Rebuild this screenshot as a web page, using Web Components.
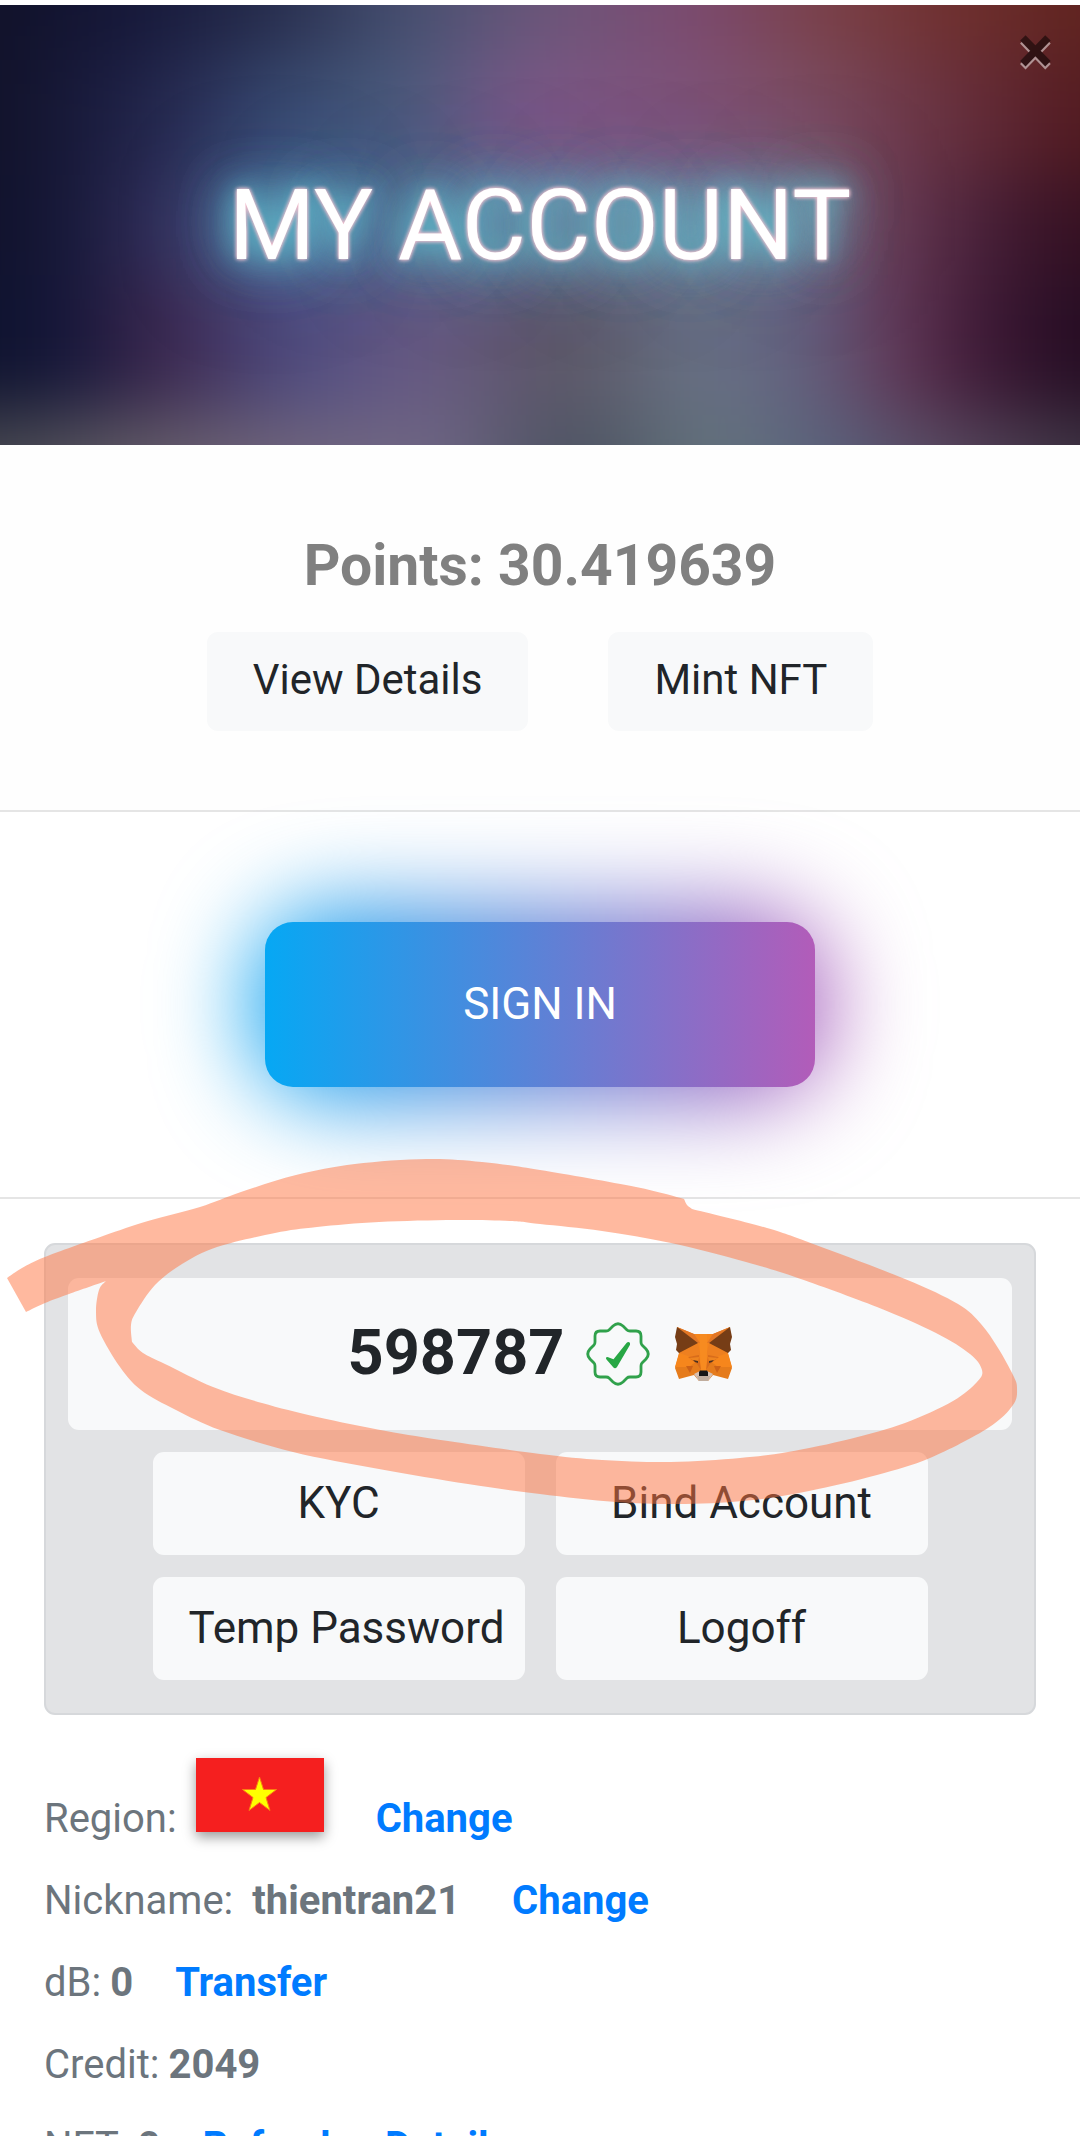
<!DOCTYPE html>
<html lang="en">
<head>
<meta charset="utf-8">
<meta name="viewport" content="width=device-width, initial-scale=1">
<title>My Account</title>
<style>
  html, body { margin: 0; height: 100%; background: #fff; }
  body { font-family: Roboto, "Liberation Sans", sans-serif; color: #212529; overflow: hidden; }
</style>
</head>
<body>
<account-page></account-page>

<script>
const define = (name, html, setup) => {
  const template = document.createElement('template');
  template.innerHTML = html;
  customElements.define(name, class extends HTMLElement {
    constructor() {
      super();
      this.attachShadow({ mode: 'open' }).append(template.content.cloneNode(true));
    }
    connectedCallback() { if (setup) setup(this, this.shadowRoot); }
  });
};

// One horizontal band of the hero's colour field; stops are "offset colour" pairs.
const band = (id, stops) => `<linearGradient id="${id}" gradientUnits="userSpaceOnUse" x1="0" y1="0" x2="1080" y2="0">` +
  stops.map(([o, c]) => `<stop offset="${o}" stop-color="${c}"/>`).join('') + '</linearGradient>';

define('hero-banner', `
<style>
  :host { display: grid; height: 440px; overflow: hidden; position: relative; background: #2a2a45; }
  svg, h1 { grid-area: 1 / 1; }
  svg { width: 100%; height: 100%; min-height: 0; }
  h1 { margin: 0; place-self: center; z-index: 1; font-size: 99px; line-height: 118px; font-weight: 400; color: #fff;
       text-shadow: 0 0 4px #f3b5c6, 0 0 4px #f3d5e0, 0 0 28px #5fc6d4, 0 0 56px #6cc8d2, 0 0 56px #6cc0d0, 0 0 110px rgba(80, 110, 190, .5); }
  button { position: absolute; z-index: 2; top: 13px; right: 27px; padding: 0; border: 0; background: none;
           font: 700 66px/66px Roboto, sans-serif; color: #000; text-shadow: 0 3px 0 #fff; opacity: .5; }
</style>
<svg viewBox="0 0 1080 440" preserveAspectRatio="none" aria-hidden="true">
  <defs>
    <filter id="soft" filterUnits="userSpaceOnUse" x="-120" y="-180" width="1320" height="800" color-interpolation-filters="sRGB"><feGaussianBlur stdDeviation="36"/></filter>
    ${band('r1', [[0,'#11122a'],[.125,'#16183a'],[.25,'#262c4c'],[.375,'#454f70'],[.5,'#6b577a'],[.64,'#7c4a70'],[.76,'#7a4149'],[.88,'#70302f'],[1,'#602420']])}
    ${band('r2', [[0,'#11122a'],[.1,'#1c1e42'],[.18,'#2b3058'],[.25,'#374a72'],[.375,'#4b5d7e'],[.48,'#7b5789'],[.64,'#7e5379'],[.75,'#7b4e64'],[.86,'#6a3444'],[1,'#521a20']])}
    ${band('r3', [[0,'#10122c'],[.08,'#1a1b3e'],[.15,'#36325e'],[.25,'#45598a'],[.4,'#526488'],[.55,'#6b6787'],[.7,'#726c88'],[.8,'#70465e'],[.86,'#5c3049'],[.92,'#431c34'],[1,'#351021']])}
    ${band('r4', [[0,'#0f132f'],[.06,'#15173a'],[.15,'#3c274e'],[.27,'#4e4c80'],[.39,'#685a84'],[.52,'#5c5766'],[.65,'#687286'],[.75,'#625f7e'],[.83,'#633857'],[.9,'#401b38'],[1,'#240c22']])}
    ${band('r5', [[0,'#484951'],[.125,'#625c67'],[.25,'#70647a'],[.39,'#716886'],[.53,'#4a5160'],[.66,'#64747c'],[.77,'#58617c'],[.88,'#58485f'],[1,'#3d3443']])}
  </defs>
  <g filter="url(#soft)">
    <rect x="-120" y="-180" width="1320" height="236" fill="url(#r1)"/>
    <rect x="-120" y="55" width="1320" height="116" fill="url(#r2)"/>
    <rect x="-120" y="170" width="1320" height="101" fill="url(#r3)"/>
    <rect x="-120" y="270" width="1320" height="141" fill="url(#r4)"/>
    <rect x="-120" y="410" width="1320" height="210" fill="url(#r5)"/>
  </g>
</svg>
<h1><slot></slot></h1>
<button type="button" aria-label="Close">×</button>`);

define('light-button', `
<style>
  :host { display: block; }
  button { display: block; box-sizing: border-box; width: 100%; height: 103px; margin: 0; padding: 0 36px 2px; border: 0; border-radius: 11px;
           background: #f8f9fa; color: #212529; font: 400 44px/66px Roboto, sans-serif; white-space: nowrap; }
  :host([compact]) button { height: 99px; padding: 16px 46px 20px; font-size: 42px; line-height: 63px; }
</style>
<button type="button"><slot></slot></button>`);

define('points-panel', `
<style>
  :host { display: block; padding: 86px 0 79px; text-align: center; background: #fefefe; border-bottom: 2px solid #e5e5e5; }
  h2 { margin: 0 0 31px; font-size: 57px; line-height: 70px; font-weight: 700; color: #808080; }
  div { display: flex; justify-content: center; gap: 80px; }
</style>
<h2>Points: 30.419639</h2>
<div><light-button compact>View Details</light-button><light-button compact>Mint NFT</light-button></div>`);

define('glow-button', `
<style>
  :host { display: flex; justify-content: center; padding: 110px 0; border-bottom: 2px solid #e5e5e5; }
  button { position: relative; isolation: isolate; width: 550px; height: 165px; padding: 0 0 2px; border: 0; background: none;
           color: #fff; font: 400 44px/66px Roboto, sans-serif; }
  button::before, button::after { content: ""; position: absolute; inset: 0; z-index: -1; border-radius: 28px;
           background: linear-gradient(90deg, #06a8f4, #b25cb9); }
  button::before { inset: -14px; border-radius: 80px; filter: blur(47px); }
</style>
<button type="button"><slot></slot></button>`);

define('verified-badge', `
<style>:host { display: block; width: 64px; height: 64px; } svg { display: block; width: 100%; height: 100%; }</style>
<svg viewBox="0 0 64 64" role="img" aria-label="Verified">
  <path d="M27 4 Q32 -.5 37 4 L41 8 Q42 9 44 9 H50 Q55 9 55 14 V20 Q55 22 56 23 L60 27 Q64.500 32 60 37 L56 41 Q55 42 55 44 V50 Q55 55 50 55 H44 Q42 55 41 56 L37 60 Q32 64.500 27 60 L23 56 Q22 55 20 55 H14 Q9 55 9 50 V44 Q9 42 8 41 L4 37 Q-.5 32 4 27 L8 23 Q9 22 9 20 V14 Q9 9 14 9 H20 Q22 9 23 8Z" fill="none" stroke="#30a14b" stroke-width="2.800"/>
  <path d="M20.500 37.500 Q19 35 21.500 35 L27.500 37.200 L40.500 21 Q42.500 19 44 21 Q44.500 22.500 43 24.500 L31 45 Q29 47.500 27 45Z" fill="#28a745"/>
</svg>`);

define('fox-logo', `
<style>:host { display: block; width: 57px; height: 54px; } svg { display: block; width: 100%; height: 100%; }</style>
<svg viewBox="0 0 57 54" role="img" aria-label="MetaMask">
  <path fill="#e57b1b" d="M2 0 19 7H38L55 0 53 27 57 41 53 52 38 48 33 54H24L19 48 4 52 0 41 4 27Z"/>
  <path fill="#f6861c" d="M19 7H38L36 17 53 26 57 40H43L34 33 31 44H26L23 33 14 40H0L4 26 21 17Z"/>
  <path fill="#e27625" d="M2 0 19 7 25 16 23 16ZM55 0 38 7 32 16 34 16Z"/>
  <path fill="#ee8020" d="M4 26 23 16 26 29 13 29ZM53 26 34 16 31 29 44 29Z"/>
  <path fill="#f78b20" d="M25 7H32V25L31 45H26L25 25Z"/>
  <path fill="#d86c1b" d="M13 30 24 28 26 43 22 37ZM44 30 33 28 31 43 35 37Z"/>
  <path fill="#ee8420" d="M14 31 24 30 23 36ZM43 31 33 30 34 36Z"/>
  <path fill="#cd6116" d="M11 39H18L15 46ZM46 39H39L42 46Z"/>
  <path fill="#763d16" d="M2 0 23 16 4 26 1 23 2 17 0 10ZM55 0 34 16 53 26 56 23 55 17 57 10Z"/>
  <path fill="#4a3020" d="M18 33 23 34V36L20 35ZM39 33 34 34V36L37 35Z"/>
  <path fill="#d5bfb2" d="M19 47 25 44H32L38 47 33 54H24Z"/>
  <path fill="#c0ad9e" d="M22 49H35L33 54H24Z"/>
  <path fill="#161616" d="M25 43.500H32L33 45V49H24V45Z"/>
</svg>`);

define('account-card', `
<style>
  :host { display: block; margin: 44px 44px 43px; padding: 33px 22px; background: #e2e3e5; border: 2px solid #d6d8db; border-radius: 11px; }
  .id { display: flex; align-items: center; justify-content: center; height: 152px; background: #f8f9fa; border-radius: 11px; }
  strong { font-size: 63px; line-height: 74px; margin: 0 22px 2px 0; }
  fox-logo { margin-left: 25px; }
  .grid { display: grid; grid-template-columns: 372px 372px; justify-content: center; gap: 22px 31px; margin-top: 22px; }
</style>
<div class="id"><strong>598787</strong><verified-badge></verified-badge><fox-logo></fox-logo></div>
<div class="grid">
  <light-button>KYC</light-button><light-button>Bind Account</light-button>
  <light-button>Temp Password</light-button><light-button>Logoff</light-button>
</div>`);

define('region-flag', `
<style>:host { display: inline-block; width: 128px; height: 74px; box-shadow: 0 5px 12px rgba(0, 0, 0, .4); } svg { display: block; width: 100%; height: 100%; }</style>
<svg viewBox="0 0 128 74" role="img" aria-label="Vietnam"><rect width="128" height="74" fill="#f51f1f"/>
<path fill="#ff0" stroke="#f98010" stroke-width="1" d="M63.500 19 67.500 31.500H80.500L70 39.500 74 52.500 63.500 44.500 53 52.500 57 39.500 46.500 31.500H59.500Z"/></svg>`);

define('detail-row', `
<style>
  :host { display: flex; align-items: baseline; gap: 9px; margin-bottom: 22px; font-size: 40px; line-height: 60px; color: #6c757d; white-space: nowrap; }
  :host([wide]) { gap: 19px; }
  ::slotted(a) { margin-left: 33px; color: #007bff; font-weight: 700; text-decoration: none; }
  ::slotted(b) { font-weight: 700; }
</style>
<slot name="label"></slot><slot></slot>`);

define('scribble-ring', `
<style>:host { display: block; position: absolute; top: 0; left: 0; width: 100%; pointer-events: none; } svg { display: block; width: 100%; }</style>
<svg viewBox="0 0 1080 1600" aria-hidden="true"><path fill="#ff733f" fill-opacity=".5" fill-rule="evenodd"/></svg>`, (host, root) => {
  // Each list is a smooth run of points; runs meet at the sharp corners of the marker stroke.
  const outer = [
    [[7,1278],[22,1268],[45,1257],[103,1236],[148,1221],[200,1207],[241,1192],[296,1175],[355,1164],[427,1159],[482,1162],[540,1170],[636,1187],[684,1199]],
    [[684,1199],[687,1205],[692,1209]],
    [[692,1209],[767,1228],[816,1245],[905,1279],[958,1304],[981,1324],[998,1348],[1013,1375],[1017,1388],[1013,1405],[988,1428],[930,1458],[877,1475],[809,1491],[753,1500],[685,1504],[616,1502],[540,1494],[468,1484],[379,1469],[293,1452],[220,1430],[176,1410],[141,1390],[120,1367],[100,1333],[96,1312],[99,1290],[106,1281]],
    [[106,1281],[69,1294],[45,1303],[26,1312]]
  ];
  const inner = [[[132,1342],[131,1325],[136,1312],[155,1285],[182,1264],[217,1247],[275,1233],[317,1227],[379,1222],[455,1220],[510,1221],[540,1224],[602,1231],[671,1243],[746,1262],[795,1277],[877,1307],[936,1333],[970,1354],[982,1370],[977,1382],[953,1401],[905,1423],[850,1439],[788,1452],[740,1458],[671,1462],[602,1460],[540,1454],[448,1441],[386,1431],[317,1417],[262,1403],[213,1387],[165,1364],[143,1353],[132,1342]]];
  const trace = runs => 'M' + runs[0][0] + runs.map(p => p.slice(1).map((c, i) => {
    const a = p[i - 1] || p[i], b = p[i], d = p[i + 2] || c;
    return `C${b[0] + (c[0] - a[0]) / 6} ${b[1] + (c[1] - a[1]) / 6} ${c[0] - (d[0] - b[0]) / 6} ${c[1] - (d[1] - b[1]) / 6} ${c}`;
  }).join('')).join('') + 'Z';
  root.querySelector('path').setAttribute('d', trace(outer) + trace(inner));
});

define('account-page', `
<style>
  :host { display: block; position: relative; height: 100vh; overflow: hidden; box-sizing: border-box; padding-top: 5px; background: #fff; }
  section { padding: 0 44px; }
</style>
<hero-banner>MY ACCOUNT</hero-banner>
<points-panel></points-panel>
<glow-button>SIGN IN</glow-button>
<account-card></account-card>
<section>
  <detail-row wide><span slot="label">Region:</span><region-flag></region-flag><a href="#region">Change</a></detail-row>
  <detail-row wide><span slot="label">Nickname:</span><b>thientran21</b><a href="#nickname">Change</a></detail-row>
  <detail-row><span slot="label">dB:</span><b>0</b><a href="#transfer">Transfer</a></detail-row>
  <detail-row><span slot="label">Credit:</span><b>2049</b></detail-row>
  <detail-row><span slot="label">NFT:</span><b>0</b><a href="#refresh">Refresh</a><a href="#details">Details</a></detail-row>
</section>
<scribble-ring></scribble-ring>`);
</script>
</body>
</html>
